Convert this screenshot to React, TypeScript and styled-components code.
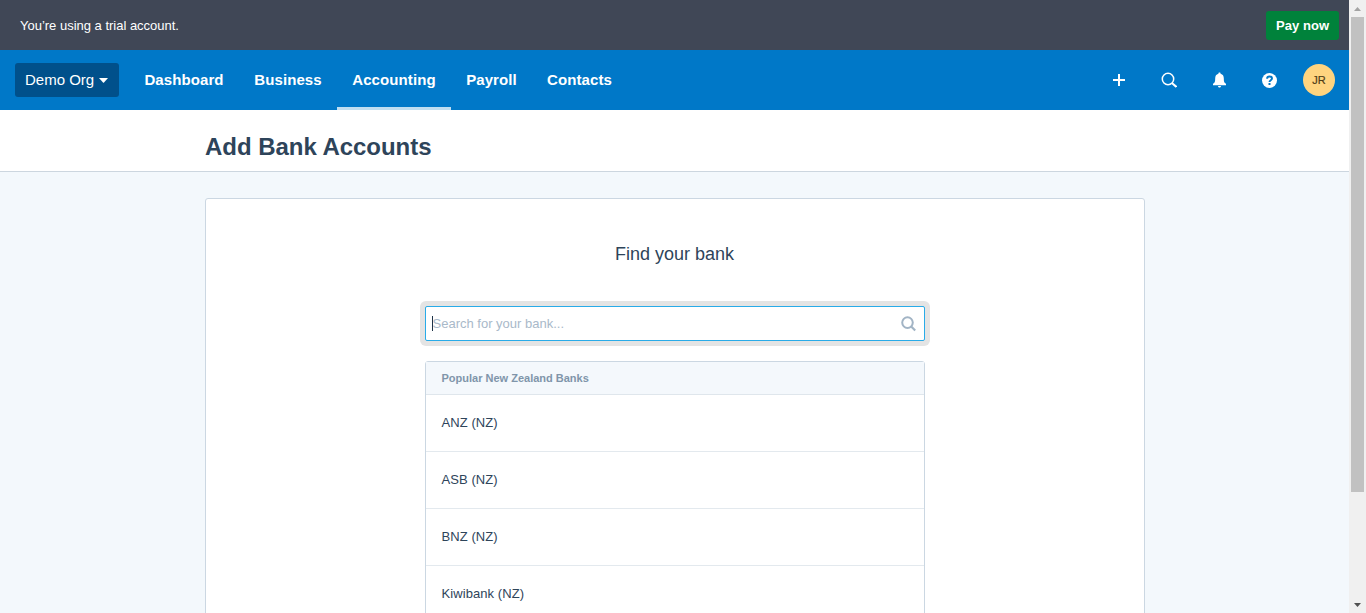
import React from "react";
import styled, { createGlobalStyle } from "styled-components";

const GlobalStyle = createGlobalStyle`
  *, *::before, *::after { box-sizing: border-box; }
  html, body { margin: 0; height: 100%; overflow: hidden; }
  body {
    font-family: "Liberation Sans", Arial, Helvetica, sans-serif;
    font-size: 13px;
    color: #2e445a;
    background: #f3f8fc;
  }
  button, input { font: inherit; margin: 0; }
  h1, h2, h3, ul { margin: 0; padding: 0; }
`;

const Screen = styled.div`
  display: flex;
  height: 613px;
  overflow: hidden;
`;

const Page = styled.div`
  flex: 1;
  min-width: 0;
  display: flex;
  flex-direction: column;
  overflow: hidden;
`;

const TrialBar = styled.div`
  flex: none;
  display: flex;
  align-items: center;
  justify-content: space-between;
  height: 50px;
  padding: 1px 10px 0 20px;
  background: #404756;
  color: #fff;
`;

const TrialText = styled.span`
  letter-spacing: -0.01px;
`;

const PayButton = styled.button`
  width: 73px;
  height: 29px;
  padding: 0;
  border: 0;
  border-radius: 3px;
  background: #00823b;
  color: #fff;
  font-weight: bold;
  letter-spacing: 0.05px;
`;

const Header = styled.header`
  flex: none;
  display: flex;
  align-items: center;
  height: 60px;
  padding: 0 14px 0 15px;
  background: #0078c8;
  color: #fff;
`;

const OrgButton = styled.button`
  display: flex;
  align-items: center;
  gap: 5px;
  width: 104px;
  height: 34px;
  margin-right: 10px;
  padding: 0 0 1px 10px;
  border: 0;
  border-radius: 3px;
  background: #00508b;
  color: #fff;
  font-size: 15px;
  white-space: nowrap;

  svg { margin-top: 2px; }
`;

const Nav = styled.nav`
  display: flex;
  height: 100%;
`;

const NavItem = styled.a<{ $active?: boolean; $width: number }>`
  display: flex;
  align-items: center;
  justify-content: center;
  width: ${(p) => p.$width}px;
  border-top: 1px solid transparent;
  border-bottom: 3px solid ${(p) => (p.$active ? "#bfdef2" : "transparent")};
  font-size: 15px;
  font-weight: bold;
  letter-spacing: 0.1px;
`;

const Tools = styled.div`
  display: flex;
  align-items: center;
  margin-left: auto;
`;

const Tool = styled.span`
  display: flex;
  align-items: center;
  justify-content: center;
  width: 50px;
  height: 50px;
`;

const Avatar = styled.span`
  display: flex;
  align-items: center;
  justify-content: center;
  width: 32px;
  height: 32px;
  margin-left: 9px;
  border-radius: 50%;
  background: #ffd47f;
  color: #4f3c16;
  font-size: 11px;
  -webkit-text-stroke: 0.2px #4f3c16;
`;

const TitleBar = styled.div`
  flex: none;
  height: 62px;
  padding: 23px 0 0 205px;
  background: #fff;
  border-bottom: 1px solid #ccd6df;
`;

const Title = styled.h1`
  font-size: 24px;
  line-height: 28px;
  font-weight: bold;
  letter-spacing: -0.04px;
`;

const Card = styled.main`
  flex: none;
  align-self: center;
  display: flex;
  flex-direction: column;
  align-items: center;
  width: 940px;
  height: 640px;
  margin-top: 26px;
  padding-top: 44px;
  background: #fff;
  border: 1px solid #cbd7e2;
  border-radius: 3px;
`;

const Subtitle = styled.h2`
  font-size: 18px;
  line-height: 22px;
  font-weight: normal;
`;

const SearchField = styled.label`
  display: flex;
  align-items: center;
  width: 500px;
  height: 35px;
  margin-top: 41px;
  padding: 0 8px 0 6px;
  background: #fff;
  border: 1px solid #29abe8;
  border-radius: 2px;
  box-shadow: 0 0 0 5px #e4e4e4;
`;

const Caret = styled.span`
  width: 1px;
  height: 15px;
  background: #1e3348;
`;

const SearchInput = styled.input`
  flex: 1;
  min-width: 0;
  padding: 0;
  border: 0;
  outline: 0;
  background: transparent;
  color: #2e445a;
  &::placeholder { color: #a9b9c9; opacity: 1; }
`;

const BankList = styled.ul`
  width: 500px;
  margin-top: 20px;
  list-style: none;
  border: 1px solid #cbd7e2;
  border-radius: 3px 3px 0 0;
`;

const ListHeading = styled.li`
  height: 33px;
  padding-left: 16px;
  background: #f4f8fc;
  border-bottom: 1px solid #dfe6ec;
  color: #8095aa;
  font-size: 11px;
  line-height: 32px;
  font-weight: bold;
`;

const BankRow = styled.li`
  height: 57px;
  padding-left: 16px;
  border-bottom: 1px solid #e3e9ee;
  font-size: 13px;
  line-height: 55px;
`;

const BankName = styled.span`
  letter-spacing: 0.08px;
`;

const Scrollbar = styled.div`
  flex: none;
  display: flex;
  flex-direction: column;
  align-items: center;
  width: 17px;
  background: #f0f0f0;
`;

const ScrollArrow = styled.span`
  display: flex;
  align-items: center;
  justify-content: center;
  width: 17px;
  height: 17px;
`;

const Thumb = styled.div`
  width: 13px;
  height: 475px;
  margin-bottom: auto;
  background: #c1c1c1;
`;

const navItems = [
  { label: "Dashboard", width: 110 },
  { label: "Business", width: 98 },
  { label: "Accounting", width: 114, active: true },
  { label: "Payroll", width: 81 },
  { label: "Contacts", width: 95 },
];

const banks = ["ANZ (NZ)", "ASB (NZ)", "BNZ (NZ)", "Kiwibank (NZ)"];

const CaretDown = () => (
  <svg width="9" height="5" viewBox="0 0 9 5" fill="#fff">
    <path d="M0 0h9L5 4.6q-.5.5-1 0z" />
  </svg>
);

const PlusIcon = () => (
  <svg width="12" height="12" viewBox="0 0 12 12" fill="#fff">
    <path d="M5 0h2v5h5v2H7v5H5V7H0V5h5z" />
  </svg>
);

const SearchIcon = () => (
  <svg width="16" height="16" viewBox="0 0 16 16" fill="none" stroke="#fff">
    <circle cx="7" cy="7" r="5.700" strokeWidth="1.500" />
    <path d="M10.900 10.900l4.500 4" strokeWidth="2" />
  </svg>
);

const BellIcon = () => (
  <svg width="14" height="16" viewBox="0 0 14 16" fill="#fff">
    <path d="M7.500.5c.8 0 1.100.5 1.100 1.200 2.200.6 3.200 2.200 3.200 4.500 0 3.300.4 4.600 2.200 5.600v1.500H1v-1.500c1.800-1 2.200-2.300 2.200-5.600 0-2.300 1-3.900 3.200-4.500C6.400 1 6.700.5 7.500.5zM6 14h3c0 .9-.6 1.500-1.500 1.500S6 14.900 6 14z" />
  </svg>
);

const HelpIcon = () => (
  <svg width="16" height="16" viewBox="0 0 16 16" fill="none">
    <circle cx="8.500" cy="8.500" r="7.500" fill="#fff" />
    <path d="M6.100 6.800C6.100 5.300 7.100 4.500 8.500 4.500s2.500.8 2.500 2.100C11 8.200 8.500 8.300 8.500 10" stroke="#0078c8" strokeWidth="1.900" />
    <path d="M7.500 11h2v2h-2z" fill="#0078c8" />
  </svg>
);

const FieldSearchIcon = () => (
  <svg width="16" height="16" viewBox="0 0 16 16" fill="none" stroke="#a2b4c5" strokeWidth="2">
    <circle cx="7.500" cy="6.600" r="5.300" />
    <path d="M11 10.300l4.200 4.200" strokeWidth="2.200" />
  </svg>
);

export default function App() {
  return (
    <>
      <GlobalStyle />
      <Screen>
        <Page>
          <TrialBar>
            <TrialText>You’re using a trial account.</TrialText>
            <PayButton>Pay now</PayButton>
          </TrialBar>
          <Header>
            <OrgButton>
              Demo Org
              <CaretDown />
            </OrgButton>
            <Nav>
              {navItems.map((item) => (
                <NavItem key={item.label} $active={item.active} $width={item.width}>
                  {item.label}
                </NavItem>
              ))}
            </Nav>
            <Tools>
              <Tool><PlusIcon /></Tool>
              <Tool><SearchIcon /></Tool>
              <Tool><BellIcon /></Tool>
              <Tool><HelpIcon /></Tool>
              <Avatar>JR</Avatar>
            </Tools>
          </Header>
          <TitleBar>
            <Title>Add Bank Accounts</Title>
          </TitleBar>
          <Card>
            <Subtitle>Find your bank</Subtitle>
            <SearchField>
              <Caret />
              <SearchInput placeholder="Search for your bank..." />
              <FieldSearchIcon />
            </SearchField>
            <BankList>
              <ListHeading>Popular New Zealand Banks</ListHeading>
              {banks.map((bank) => (
                <BankRow key={bank}>
                  <BankName>{bank}</BankName>
                </BankRow>
              ))}
            </BankList>
          </Card>
        </Page>
        <Scrollbar>
          <ScrollArrow>
            <svg width="7" height="4" viewBox="0 0 7 4" fill="#a3a3a3"><path d="M0 4L3.500 0 7 4z" /></svg>
          </ScrollArrow>
          <Thumb />
          <ScrollArrow>
            <svg width="7" height="4" viewBox="0 0 7 4" fill="#505050"><path d="M0 0h7L3.500 4z" /></svg>
          </ScrollArrow>
        </Scrollbar>
      </Screen>
    </>
  );
}
